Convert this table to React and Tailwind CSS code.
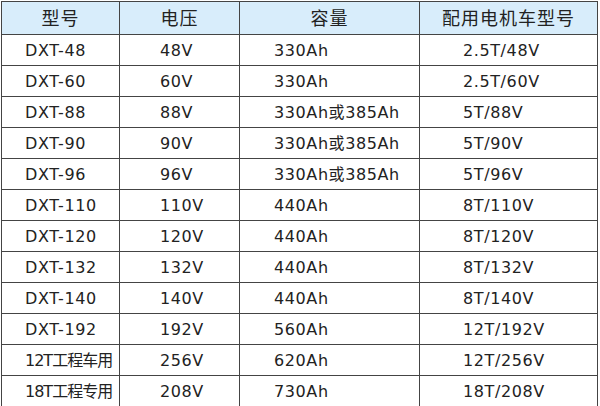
const ROWS = [
  ["DXT-48", "48V", "330Ah", "2.5T/48V"],
  ["DXT-60", "60V", "330Ah", "2.5T/60V"],
  ["DXT-88", "88V", "330Ah或385Ah", "5T/88V"],
  ["DXT-90", "90V", "330Ah或385Ah", "5T/90V"],
  ["DXT-96", "96V", "330Ah或385Ah", "5T/96V"],
  ["DXT-110", "110V", "440Ah", "8T/110V"],
  ["DXT-120", "120V", "440Ah", "8T/120V"],
  ["DXT-132", "132V", "440Ah", "8T/132V"],
  ["DXT-140", "140V", "440Ah", "8T/140V"],
  ["DXT-192", "192V", "560Ah", "12T/192V"],
  ["12T工程车用", "256V", "620Ah", "12T/256V"],
  ["18T工程专用", "208V", "730Ah", "18T/208V"],
];

const HEAD = ["型号", "电压", "容量", "配用电机车型号"];

// left padding for each column, measured from the lines
const PAD = ["pl-[23px]", "pl-[40px]", "pl-[34px]", "pl-[43px]"];

export default function App() {
  return (
    <div
      className="w-[600px] h-[406px] bg-white pl-px pt-px text-[#222]"
      style={{ fontFamily: '"DejaVu Sans", "Noto Sans CJK SC", sans-serif' }}
    >
      <table className="border-collapse table-fixed w-[596px]">
        <colgroup>
          <col className="w-[118px]" />
          <col className="w-[120px]" />
          <col className="w-[180px]" />
          <col className="w-[178px]" />
        </colgroup>
        <thead>
          <tr className="h-[33px] bg-[#d8edfb]">
            {HEAD.map((h) => (
              <th key={h} className="border border-[#444] text-center text-[18px] font-normal leading-none p-0 pt-[2px] tracking-[1px]">
                {h}
              </th>
            ))}
          </tr>
        </thead>
        <tbody>
          {ROWS.map((r) => (
            <tr key={r[0]} className="h-[31px]">
              {r.map((c, i) => {
                // the long cjk names need to stay inside the first column
                const tight = i === 0 && /[\u4e00-\u9fff]/.test(c);
                return (
                  <td
                    key={i}
                    className={`border border-[#444] text-left text-[16px] leading-none p-0 pt-[2px] whitespace-nowrap ${
                      tight ? "tracking-[-1px]" : "tracking-[0.6px]"
                    } ${PAD[i]}`}
                  >
                    {c}
                  </td>
                );
              })}
            </tr>
          ))}
        </tbody>
      </table>
    </div>
  );
}
